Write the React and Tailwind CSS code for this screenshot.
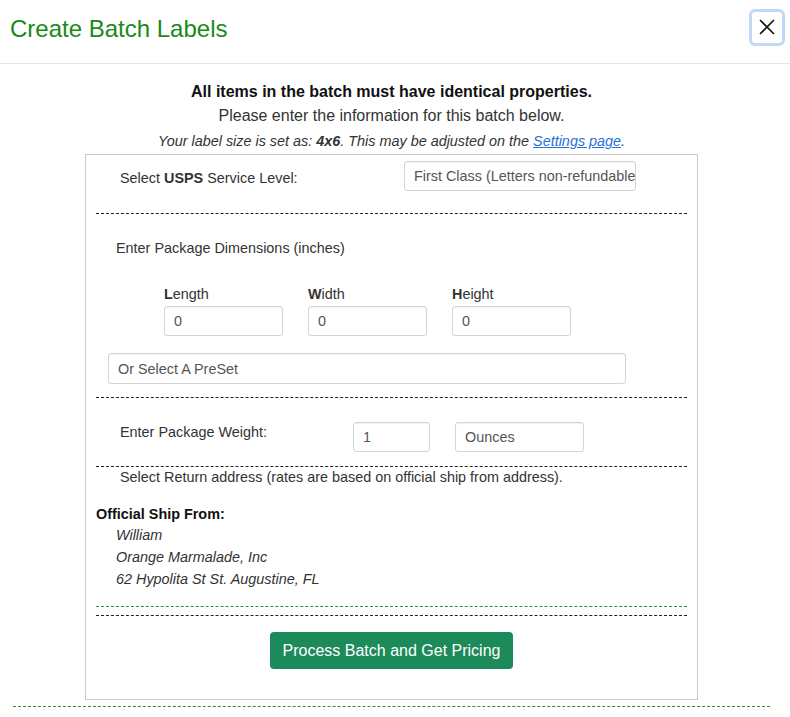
import React from 'react';

const font = { fontFamily: '"Liberation Sans", Arial, sans-serif' };

// Dashed divider used between form sections
const Dash = ({ green = false, className = '' }) => (
    <div className={`border-t border-dashed ${green ? 'border-[#2e8b3e]' : 'border-[#222]'} ${className}`} />
);

const Field = ({ value, className = '' }) => (
    <div className={`flex items-center border border-[#d4d4d4] rounded-[3px] bg-white px-[9px] text-[14.4px] text-[#555] overflow-hidden whitespace-nowrap shadow-[inset_0_1px_1px_rgba(0,0,0,0.06)] ${className}`}>
        {value}
    </div>
);

export default function App() {
    return (
        <div className="bg-white w-[790px] h-[717px] overflow-hidden text-[#333]" style={font}>
            {/* Header */}
            <div className="h-[64px] border-b border-[#e5e5e5] flex items-center justify-between pl-[10px] pr-[5px]">
                <h1 className="text-[24px] leading-[28px] text-[#178a17] -mt-[6px]">Create Batch Labels</h1>
                <button className="w-[36px] h-[37px] -mt-[9px] rounded-[6px] border-[3px] border-[#c2d8f7] flex items-center justify-center bg-white">
                    <svg width="18" height="18" viewBox="0 0 18 18">
                        <path d="M2 2 L16 16 M16 2 L2 16" stroke="#111" strokeWidth="1.6" />
                    </svg>
                </button>
            </div>

            {/* Body */}
            <div className="w-[783px] px-[13px]">
                <div className="text-center mt-[18px]">
                    <p className="text-[16px] leading-[20px] font-bold text-[#111]">All items in the batch must have identical properties.</p>
                    <p className="text-[16px] leading-[20px] mt-[4px] text-[#333]">Please enter the information for this batch below.</p>
                    <p className="text-[14.4px] leading-[18px] mt-[6px] italic text-[#333]">
                        Your label size is set as: <b>4x6</b>. This may be adjusted on the{' '}
                        <a className="text-[#2a6fd6] underline">Settings page</a>.
                    </p>
                </div>

                {/* Form box */}
                <div className="mx-[72px] mt-[4px] h-[546px] border border-[#c9c9c9] px-[10px] text-[14.4px] leading-[20px]">
                    <div className="flex items-start mt-[6px]">
                        <div className="ml-[24px] w-[284px] mt-[7px]">
                            Select <b>USPS</b> Service Level:
                        </div>
                        <Field value="First Class (Letters non-refundable)" className="w-[232px] h-[30px]" />
                    </div>
                    <Dash className="mt-[22px]" />

                    <div className="ml-[20px] mt-[24px]">Enter Package Dimensions (inches)</div>
                    <div className="flex ml-[68px] mt-[26px] gap-[25px]">
                        {[['L', 'ength'], ['W', 'idth'], ['H', 'eight']].map(([a, b]) => (
                            <div key={a} className="w-[119px]">
                                <div><b>{a}</b>{b}</div>
                                <Field value="0" className="w-[119px] h-[30px] mt-[2px]" />
                            </div>
                        ))}
                    </div>
                    <Field value="Or Select A PreSet" className="ml-[12px] mt-[17px] w-[518px] h-[31px]" />
                    <Dash className="mt-[13px]" />

                    <div className="flex items-start mt-[24px]">
                        <div className="ml-[24px] w-[233px]">Enter Package Weight:</div>
                        <Field value="1" className="w-[77px] h-[30px]" />
                        <Field value="Ounces" className="ml-[25px] w-[129px] h-[30px]" />
                    </div>
                    <Dash className="mt-[14px]" />
                    <div className="ml-[24px]">Select Return address (rates are based on official ship from address).</div>

                    <div className="mt-[17px] font-bold text-[#111]">Official Ship From:</div>
                    <div className="ml-[20px] italic leading-[22px]">
                        <div>William</div>
                        <div>Orange Marmalade, Inc</div>
                        <div>62 Hypolita St St. Augustine, FL</div>
                    </div>
                    <Dash green className="mt-[16px]" />
                    <Dash className="mt-[8px]" />

                    <div className="flex justify-center mt-[16px]">
                        <button className="w-[243px] h-[37px] rounded-[4px] bg-[#1d8a5a] text-white text-[16px]">
                            Process Batch and Get Pricing
                        </button>
                    </div>
                </div>
                <Dash green className="mt-[6px]" />
            </div>
        </div>
    );
}
